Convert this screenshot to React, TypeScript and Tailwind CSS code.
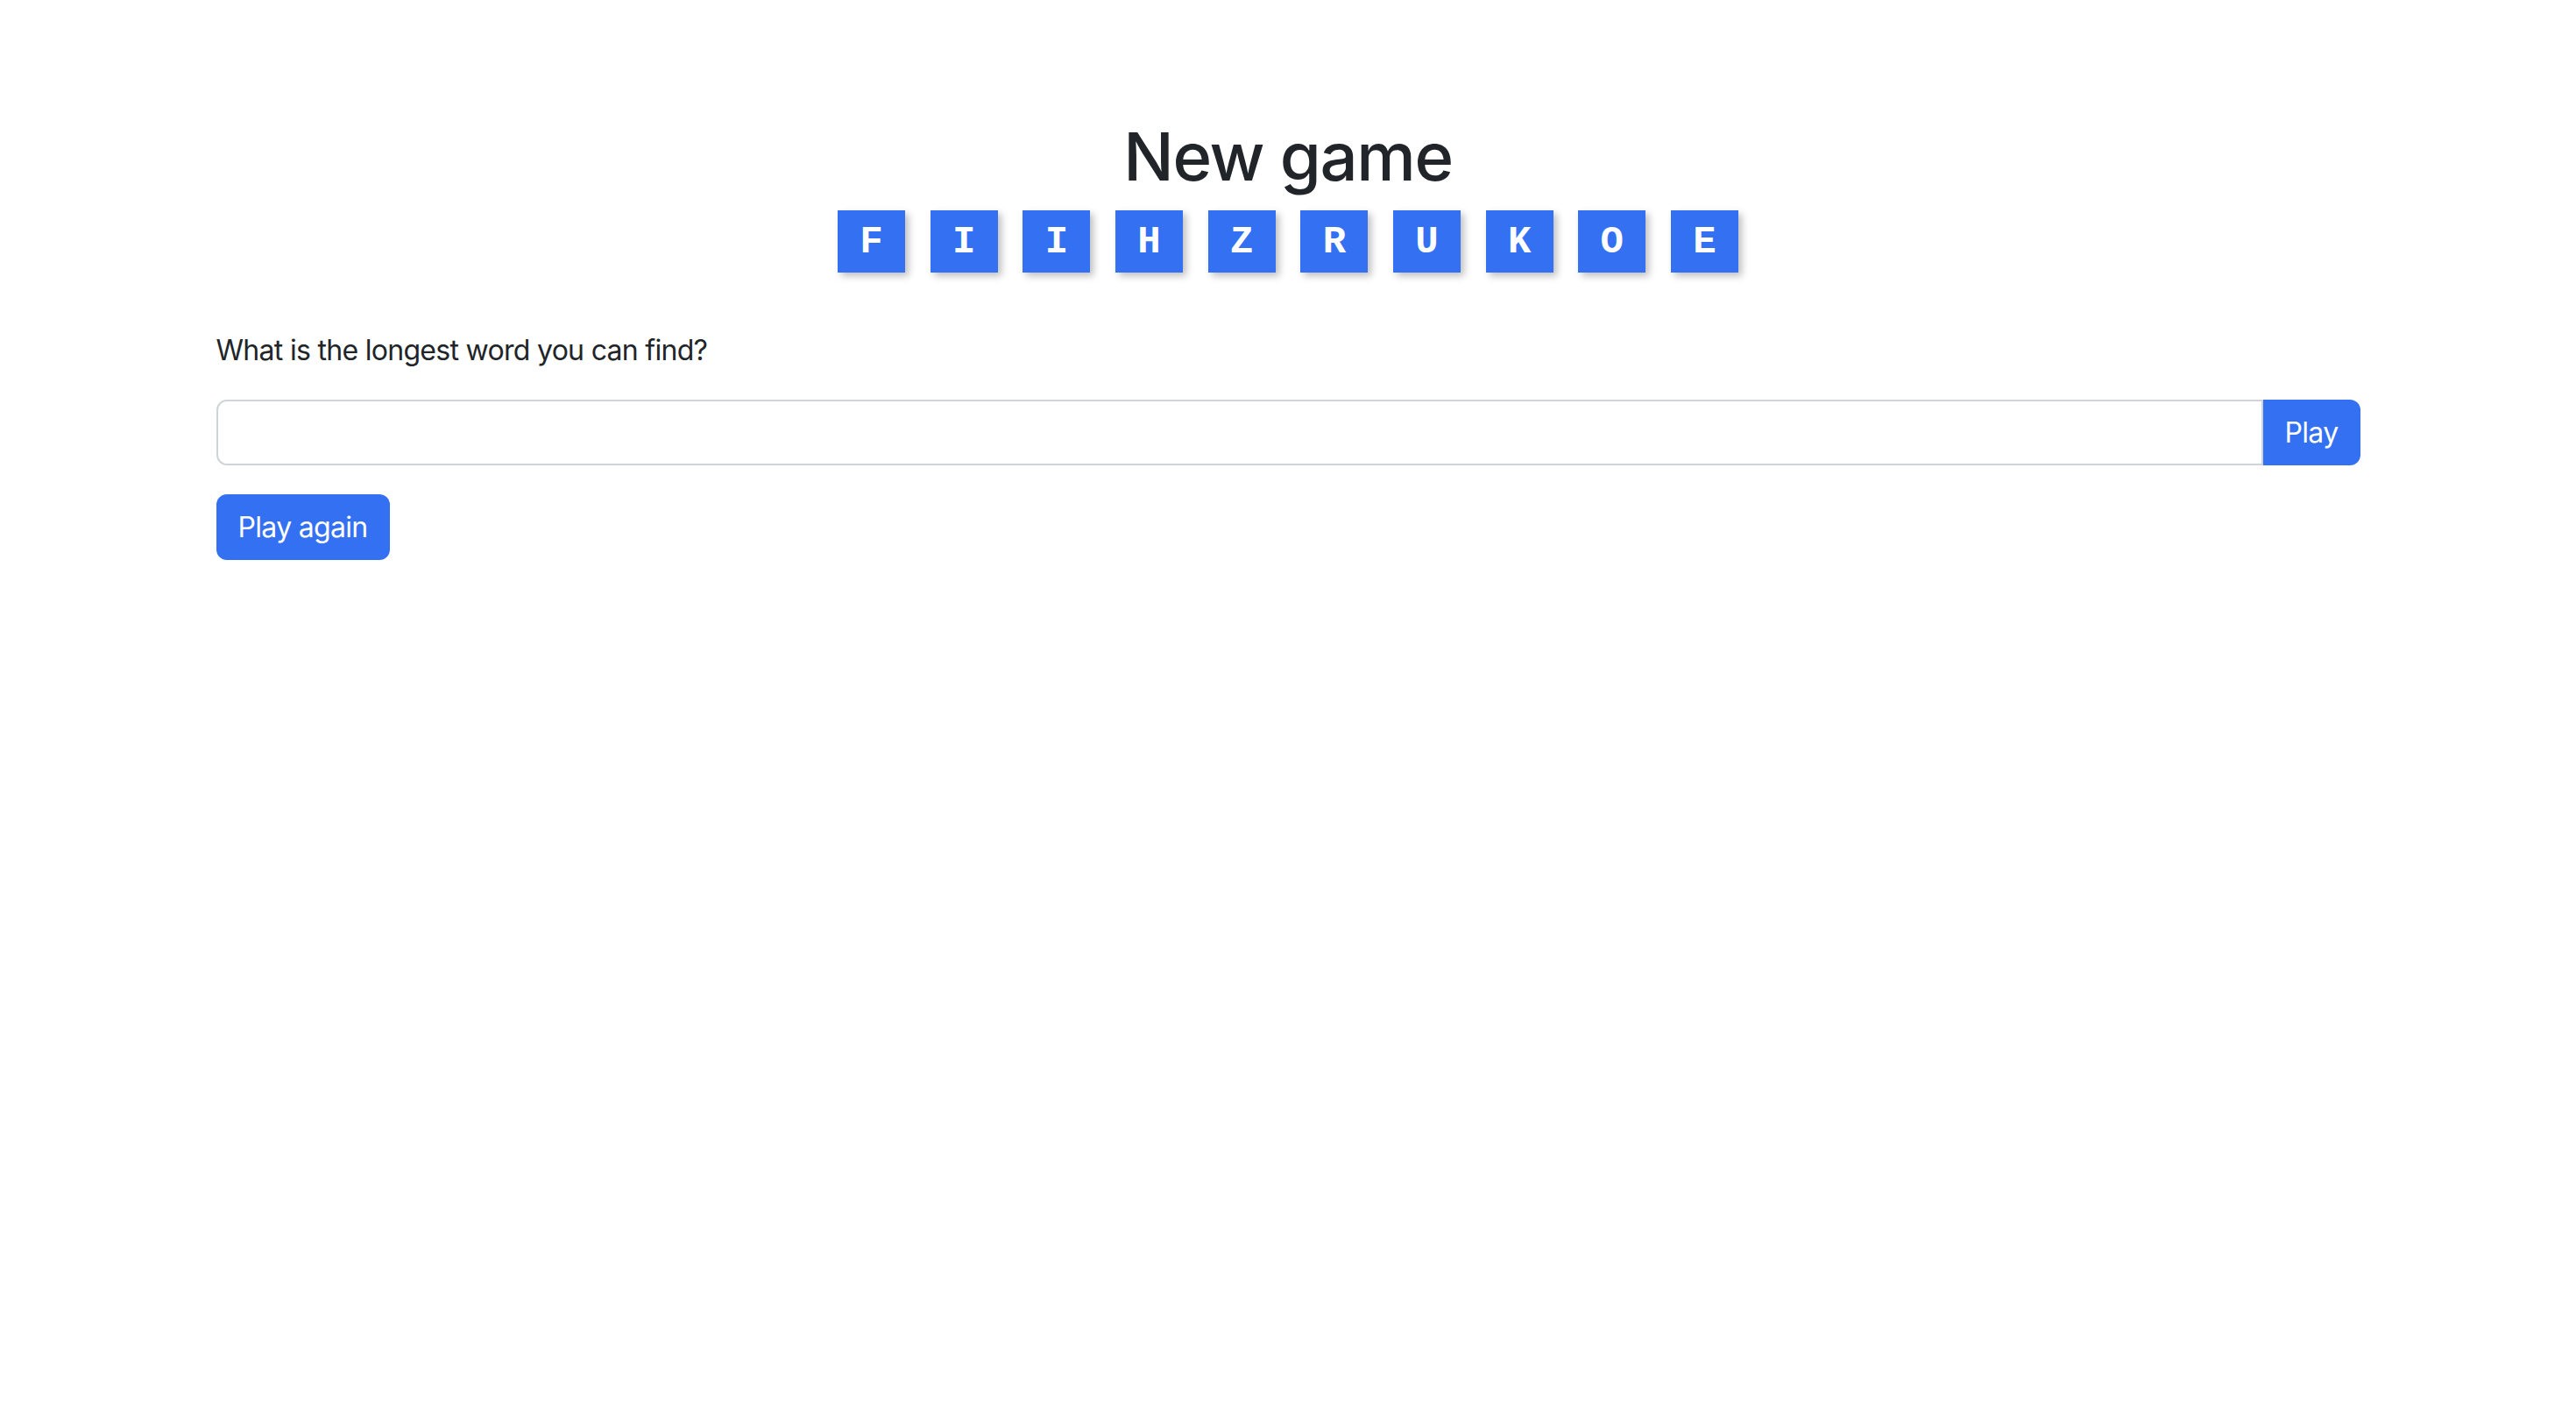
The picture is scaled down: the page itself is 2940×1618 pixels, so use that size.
import React, { useState } from 'react';

const LETTERS = ['F', 'I', 'I', 'H', 'Z', 'R', 'U', 'K', 'O', 'E'];

const App: React.FC = () => {
  const [guess, setGuess] = useState('');

  return (
    <div className="min-h-screen bg-white text-[#212529] font-['Inter','Liberation_Sans',sans-serif] tracking-[-0.7px]">
      <div className="w-[2447px] mx-auto pt-[130px]">
        {/* Title + letter tiles */}
        <h1 className="text-center text-[76px] leading-[96px] font-medium tracking-[-1.4px]">
          New game
        </h1>
        <div className="flex justify-center gap-[28.67px] mt-[14px]">
          {LETTERS.map((l, i) => (
            <div
              key={i}
              className="w-[77px] h-[71px] flex items-center justify-center bg-[#3370f2] text-white text-[44px] tracking-normal font-bold font-['Liberation_Mono','Courier_New',monospace] shadow-[4px_4px_8px_rgba(0,0,0,0.25)]"
            >
              {l}
            </div>
          ))}
        </div>

        <p className="mt-[65px] text-[32px] leading-[48px]">What is the longest word you can find?</p>

        {/* Guess input */}
        <div className="flex mt-[32px] h-[75px]">
          <input
            value={guess}
            onChange={(e) => setGuess(e.target.value)}
            className="flex-1 border-2 border-[#ced4da] rounded-l-[12px] px-[24px] text-[32px] outline-none"
          />
          <button className="w-[111px] bg-[#3370f2] text-white text-[32px] rounded-r-[12px]">Play</button>
        </div>

        <button className="mt-[33px] w-[198px] h-[75px] bg-[#3370f2] text-white text-[32px] rounded-[12px]">
          Play again
        </button>
      </div>
    </div>
  );
};

export default App;
